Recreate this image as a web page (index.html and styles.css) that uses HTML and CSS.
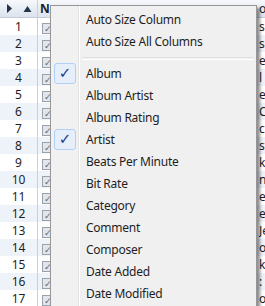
FILE: index.html
```html
<!DOCTYPE html>
<html>
<head>
    <title>Columns</title>
    <link rel="stylesheet" href="styles.css">
</head>
<body>
    <div id="grade">
        <div class="linha cabecalho">
            <div class="num">
                <svg class="seta" width="37" height="17" viewBox="0 0 37 17"><path d="M7 4 L12 8.5 L7 13 Z" fill="#22344a"/><path d="M23.5 12 L27.5 6 L31.5 12 Z" fill="#22344a"/></svg>
            </div>
            <div class="marca">N</div>
            <div class="nome"></div>
            <div class="resto">ou</div>
        </div>
        <div class="linha"><div class="num">1</div><div class="marca"><span class="caixa">&#10003;</span></div><div class="nome"></div><div class="resto">so</div></div>
        <div class="linha"><div class="num">2</div><div class="marca"><span class="caixa">&#10003;</span></div><div class="nome"></div><div class="resto">so</div></div>
        <div class="linha"><div class="num">3</div><div class="marca"><span class="caixa">&#10003;</span></div><div class="nome"></div><div class="resto">e</div></div>
        <div class="linha"><div class="num">4</div><div class="marca"><span class="caixa">&#10003;</span></div><div class="nome"></div><div class="resto">l</div></div>
        <div class="linha"><div class="num">5</div><div class="marca"><span class="caixa">&#10003;</span></div><div class="nome"></div><div class="resto">er</div></div>
        <div class="linha"><div class="num">6</div><div class="marca"><span class="caixa">&#10003;</span></div><div class="nome"></div><div class="resto">C</div></div>
        <div class="linha"><div class="num">7</div><div class="marca"><span class="caixa">&#10003;</span></div><div class="nome"></div><div class="resto">c</div></div>
        <div class="linha"><div class="num">8</div><div class="marca"><span class="caixa">&#10003;</span></div><div class="nome"></div><div class="resto">st</div></div>
        <div class="linha"><div class="num">9</div><div class="marca"><span class="caixa">&#10003;</span></div><div class="nome"></div><div class="resto">ke</div></div>
        <div class="linha"><div class="num">10</div><div class="marca"><span class="caixa">&#10003;</span></div><div class="nome"></div><div class="resto">n</div></div>
        <div class="linha"><div class="num">11</div><div class="marca"><span class="caixa">&#10003;</span></div><div class="nome"></div><div class="resto">e</div></div>
        <div class="linha"><div class="num">12</div><div class="marca"><span class="caixa">&#10003;</span></div><div class="nome"></div><div class="resto">e</div></div>
        <div class="linha"><div class="num">13</div><div class="marca"><span class="caixa">&#10003;</span></div><div class="nome"></div><div class="resto">Je</div></div>
        <div class="linha"><div class="num">14</div><div class="marca"><span class="caixa">&#10003;</span></div><div class="nome"></div><div class="resto">o</div></div>
        <div class="linha"><div class="num">15</div><div class="marca"><span class="caixa">&#10003;</span></div><div class="nome"></div><div class="resto">k</div></div>
        <div class="linha"><div class="num">16</div><div class="marca"><span class="caixa">&#10003;</span></div><div class="nome"></div><div class="resto">:</div></div>
        <div class="linha"><div class="num">17</div><div class="marca"><span class="caixa">&#10003;</span></div><div class="nome"></div><div class="resto">ol</div></div>
    </div>

    <div id="menu">
        <div class="item">Auto Size Column</div>
        <div class="item">Auto Size All Columns</div>
        <div class="separador"></div>
        <div class="item marcado"><span class="visto">&#10003;</span>Album</div>
        <div class="item">Album Artist</div>
        <div class="item">Album Rating</div>
        <div class="item marcado"><span class="visto">&#10003;</span>Artist</div>
        <div class="item">Beats Per Minute</div>
        <div class="item">Bit Rate</div>
        <div class="item">Category</div>
        <div class="item">Comment</div>
        <div class="item">Composer</div>
        <div class="item">Date Added</div>
        <div class="item">Date Modified</div>
    </div>
</body>
</html>
```

FILE: styles.css
```css
body{
    margin: 0;
    width: 265px;
    height: 306px;
    overflow: hidden;
    position: relative;
    font-family: "Noto Sans", "Open Sans", sans-serif;
    font-size: 12px;
    color: #1e1e1e;
    background-color: white;
}
#grade{
    display: flex;
    flex-direction: column;
}
.linha{
    display: flex;
    height: 17px;
    line-height: 17px;
}
.linha:nth-child(odd){
    background-color: #eef3fa;
}
.cabecalho{
    height: 18px;
    line-height: 18px;
    background: linear-gradient(#f6f8fb, #dbe3ed);
    border-bottom: 1px solid #c3ccd8;
    box-sizing: border-box;
}
.seta{
    display: block;
}
.cabecalho .marca{
    font-weight: bold;
    padding-left: 2px;
}
.num{
    width: 37px;
    border-right: 1px solid #c9d0d9;
    text-align: center;
}
.marca{
    width: 13px;
    padding-left: 4px;
    box-sizing: border-box;
}
.caixa{
    display: inline-block;
    width: 9px;
    height: 9px;
    line-height: 9px;
    border: 1px solid #9aa3ad;
    background-color: #e2e6ea;
    font-size: 9px;
    color: #5d6670;
    text-align: center;
    vertical-align: -1px;
}
.nome{
    width: 208px;
}
.resto{
    flex: 1;
    overflow: hidden;
    white-space: nowrap;
}
#menu{
    position: absolute;
    left: 50px;
    top: 5px;
    width: 207px;
    height: 320px;
    box-sizing: border-box;
    padding: 3px 2px;
    border: 1px solid #979797;
    background: linear-gradient(to right, #f1f1f1 27px, #e2e3e3 27px, #e2e3e3 28px, #ffffff 28px, #ffffff 29px, #f0f0f0 29px);
    box-shadow: 3px 3px 3px rgba(0, 0, 0, 0.45);
    letter-spacing: -0.25px;
}
.item{
    position: relative;
    height: 22px;
    line-height: 22px;
    padding-left: 33px;
}
.marcado .visto{
    position: absolute;
    left: 1px;
    top: 0;
    width: 20px;
    height: 19px;
    line-height: 19px;
    text-align: center;
    border: 1px solid #afd0f7;
    border-radius: 3px;
    background-color: #e6eef9;
    color: #1c3b8e;
    font-family: "DejaVu Sans", sans-serif;
    font-size: 15px;
    font-weight: bold;
}
.separador{
    height: 1px;
    margin: 4px 0 3px 29px;
    border-top: 1px solid #e0e0e0;
    border-bottom: 1px solid #ffffff;
}
```
